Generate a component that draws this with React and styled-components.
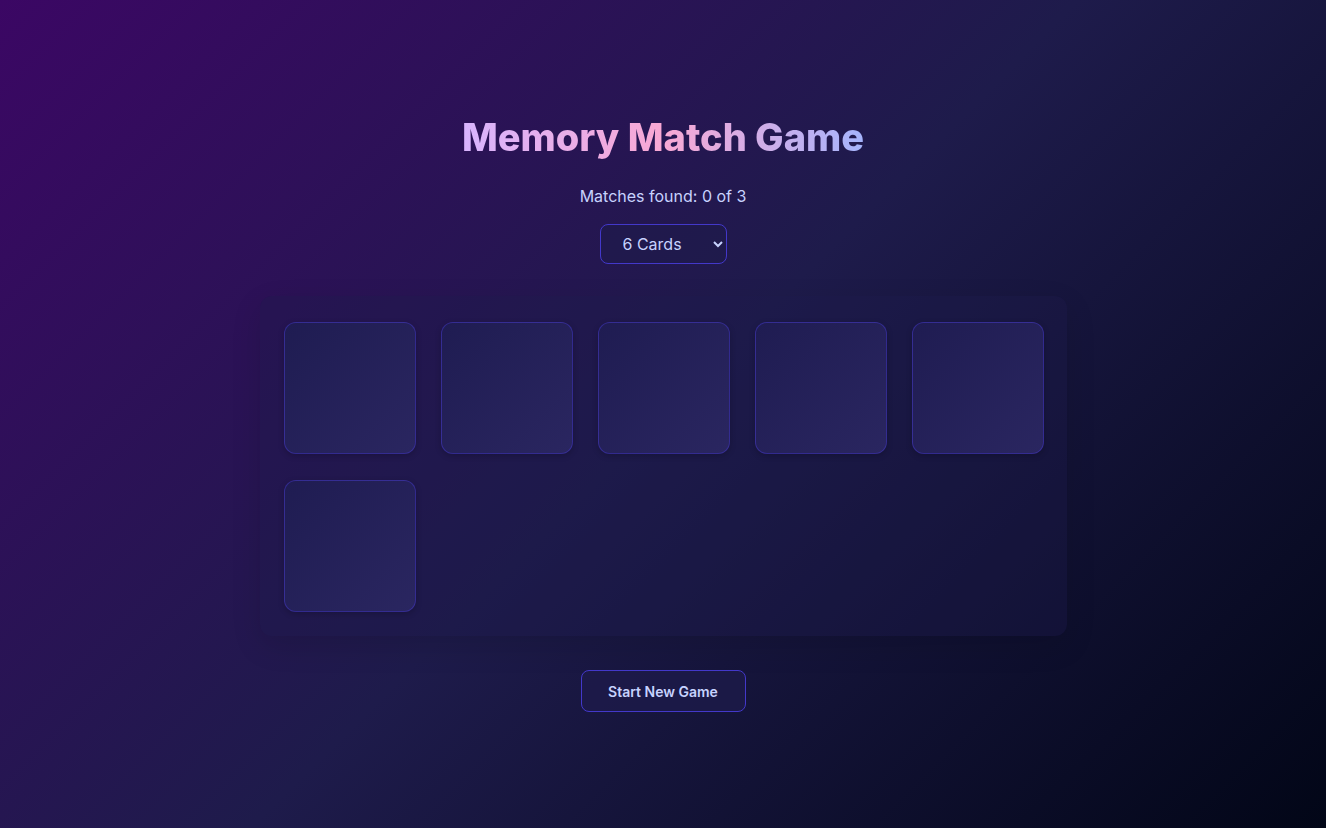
import styled, { createGlobalStyle } from "styled-components";

const GlobalStyle = createGlobalStyle`
  html, body {
    margin: 0;
    padding: 0;
  }
  body {
    font-family: Inter, "Noto Sans", sans-serif;
    background: #1e1b4b;
  }
`;

const Page = styled.div`
  min-height: 828px;
  box-sizing: border-box;
  padding-top: 112px;
  display: flex;
  flex-direction: column;
  align-items: center;
  background: linear-gradient(135deg, #3b0764 0%, #1e1b4b 50%, #020617 100%);
`;

const Title = styled.h1`
  margin: 0;
  font-size: 38px;
  line-height: 50px;
  font-weight: 800;
  background: linear-gradient(90deg, #d8b4fe 0%, #f9a8d4 50%, #a5b4fc 100%);
  -webkit-background-clip: text;
  background-clip: text;
  color: transparent;
`;

const Status = styled.p`
  margin: 22px 0 0;
  font-size: 16px;
  line-height: 24px;
  color: #c7d2fe;
`;

const Select = styled.select`
  margin-top: 16px;
  width: 127px;
  height: 40px;
  padding: 0 12px 0 18px;
  font-family: Inter, "Noto Sans", sans-serif;
  font-size: 16px;
  color: #c7d2fe;
  background: rgba(30, 27, 75, 0.6);
  border: 1px solid #4338ca;
  border-radius: 8px;
  outline: none;

  option {
    background: #1e1b4b;
  }
`;

const Board = styled.div`
  margin-top: 32px;
  width: 807px;
  box-sizing: border-box;
  padding: 26px 24px 24px;
  display: grid;
  grid-template-columns: repeat(5, 132px);
  gap: 26px 25px;
  background: rgba(30, 27, 75, 0.35);
  border-radius: 12px;
  box-shadow: 0 10px 30px rgba(0, 0, 0, 0.12);
`;

const Card = styled.button`
  width: 132px;
  height: 132px;
  padding: 0;
  cursor: pointer;
  border: 1px solid rgba(67, 56, 202, 0.5);
  border-radius: 12px;
  background: linear-gradient(135deg, #1f1c52 0%, #2a2660 100%);
  box-shadow: 0 2px 6px rgba(0, 0, 0, 0.2);
`;

const StartButton = styled.button`
  margin-top: 34px;
  width: 165px;
  height: 42px;
  font-family: Inter, "Noto Sans", sans-serif;
  font-size: 14px;
  font-weight: 600;
  color: #c7d2fe;
  background: rgba(30, 27, 75, 0.7);
  border: 1px solid #4338ca;
  border-radius: 8px;
  cursor: pointer;
`;

const cards = [1, 2, 3, 4, 5, 6];

export default function App() {
  return (
    <>
      <GlobalStyle />
      <Page>
        <Title>Memory Match Game</Title>
        <Status>Matches found: 0 of 3</Status>
        <Select defaultValue="6">
          <option value="6">6 Cards</option>
          <option value="12">12 Cards</option>
          <option value="16">16 Cards</option>
        </Select>
        <Board>
          {cards.map((c) => (
            <Card key={c} aria-label="Hidden card" />
          ))}
        </Board>
        <StartButton>Start New Game</StartButton>
      </Page>
    </>
  );
}
